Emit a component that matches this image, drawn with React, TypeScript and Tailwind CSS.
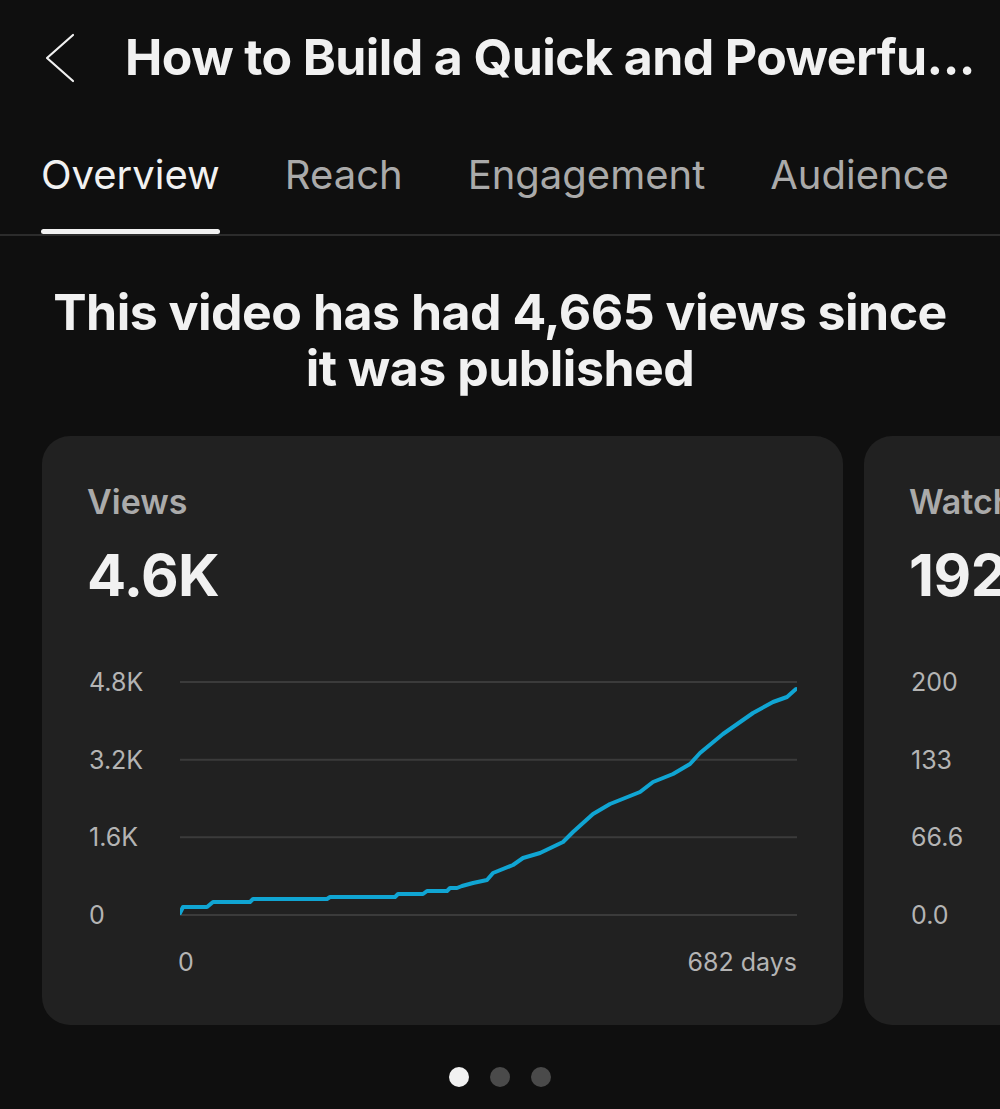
import React from "react";

const pts: [number, number][] = [
  [0, 243], [3, 237], [27, 237], [33, 232], [70, 232], [73, 229], [147, 229], [150, 227],
  [215, 227], [218, 224], [243, 224], [247, 221], [267, 221], [270, 218], [277, 218], [282, 216],
  [293, 213], [307, 210], [313, 203], [333, 195], [343, 188], [360, 183], [383, 172], [393, 162],
  [413, 144], [430, 134], [460, 122], [473, 112], [493, 104], [510, 94], [520, 83], [543, 64],
  [573, 43], [593, 32], [607, 27], [616, 19],
];

const gridY = [12, 89.67, 167.33, 245];

function Card({
  label,
  value,
  yLabels,
  xLabels,
  line,
}: {
  label: string;
  value: string;
  yLabels: string[];
  xLabels: string[];
  line: boolean;
}) {
  return (
    <div className="w-[801px] shrink-0 rounded-[28px] bg-[#212121] pl-[45px] pt-[46px] pb-[51px]">
      <div className="text-[34px] leading-[40px] font-semibold text-[#aaaaaa] whitespace-nowrap">{label}</div>
      <div className="mt-[23px] text-[58px] leading-[60px] font-bold text-[#f1f1f1] tracking-[-0.5px] whitespace-nowrap">
        {value}
      </div>
      <div className="mt-[65px] flex">
        <div className="w-[93px] h-[257px] flex flex-col justify-between pl-[2px]">
          {yLabels.map((l) => (
            <div key={l} className="h-6 leading-6 text-[25px] text-[#b4b4b4]">
              {l}
            </div>
          ))}
        </div>
        <svg width="617" height="257" viewBox="0 0 617 257" className="shrink-0">
          {gridY.map((y) => (
            <line key={y} x1="0" x2="617" y1={y} y2={y} stroke="#3b3b3b" strokeWidth="2" />
          ))}
          {line && (
            <polyline
              points={pts.map((p) => p.join(",")).join(" ")}
              fill="none"
              stroke="#10a5d3"
              strokeWidth="4"
              strokeLinejoin="round"
              strokeLinecap="round"
            />
          )}
        </svg>
      </div>
      <div className="mt-[23px] ml-[91px] w-[619px] flex justify-between text-[25px] leading-6 text-[#b4b4b4]">
        {xLabels.map((l) => (
          <span key={l}>{l}</span>
        ))}
      </div>
    </div>
  );
}

export default function App() {
  return (
    <div
      className="w-[1000px] h-[1109px] bg-[#0f0f0f] overflow-hidden text-[#f1f1f1]"
      style={{ fontFamily: "Inter, 'Noto Sans', sans-serif" }}
    >
      <div className="h-[115px] flex items-center pl-[45px]">
        <svg width="30" height="50" viewBox="0 0 30 50" className="shrink-0">
          <polyline points="28,2 2,25 28,48" fill="none" stroke="#f1f1f1" strokeWidth="2.2" strokeLinejoin="round" strokeLinecap="round" />
        </svg>
        <div className="ml-[50px] text-[50px] font-bold tracking-[-0.6px] whitespace-nowrap">
          How to Build a Quick and Powerfu...
        </div>
      </div>
      <div className="flex gap-[65px] pl-[41px] border-b-2 border-[#2c2c2c]">
        <div className="flex flex-col pt-[36px]">
          <span className="text-[40px] leading-[48px] text-[#f1f1f1] whitespace-nowrap">Overview</span>
          <div className="mt-[30px] h-[5px] rounded-full bg-[#f1f1f1]" />
        </div>
        <div className="flex flex-col pt-[36px]">
          <span className="text-[40px] leading-[48px] text-[#aaaaaa] whitespace-nowrap">Reach</span>
        </div>
        <div className="flex flex-col pt-[36px]">
          <span className="text-[40px] leading-[48px] text-[#aaaaaa] whitespace-nowrap">Engagement</span>
        </div>
        <div className="flex flex-col pt-[36px]">
          <span className="text-[40px] leading-[48px] text-[#aaaaaa] whitespace-nowrap">Audience</span>
        </div>
      </div>
      <div className="mt-[48px] text-center text-[50px] leading-[56px] font-bold tracking-[-0.5px] px-[20px]">
        This video has had 4,665 views since
        <br />
        it was published
      </div>
      <div className="mt-[40px] flex gap-[21px] pl-[42px]">
        <Card label="Views" value="4.6K" yLabels={["4.8K", "3.2K", "1.6K", "0"]} xLabels={["0", "682 days"]} line />
        <Card label="Watch time (hours)" value="192.3" yLabels={["200", "133", "66.6", "0.0"]} xLabels={["0", "682 days"]} line={false} />
      </div>
      <div className="mt-[42px] flex justify-center gap-[21px] pr-[1px]">
        <div className="w-5 h-5 rounded-full bg-[#f1f1f1]" />
        <div className="w-5 h-5 rounded-full bg-[#4a4a4a]" />
        <div className="w-5 h-5 rounded-full bg-[#4a4a4a]" />
      </div>
    </div>
  );
}
